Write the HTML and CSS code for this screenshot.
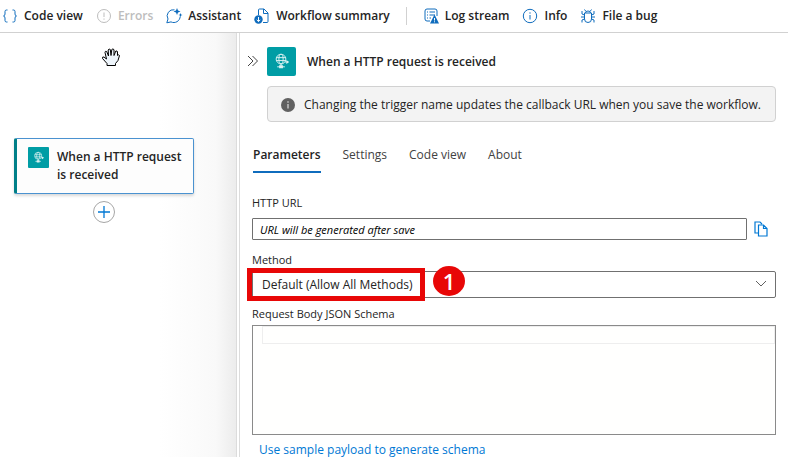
FILE: index.html
```html
<!DOCTYPE html>
<html lang="en">
<head>
<meta charset="utf-8">
<title>Workflow designer</title>
<link rel="stylesheet" href="styles.css">
</head>
<body>
<svg class="sprite" aria-hidden="true">
  <symbol id="globe" viewBox="0 0 30 30">
    <g fill="none" stroke="#d8f1f1" stroke-width="1">
      <circle cx="14.500" cy="12.500" r="5"/>
      <ellipse cx="14.500" cy="12.500" rx="2.200" ry="5"/>
      <path d="M9.500 11h10M9.500 14h10M14.500 17.500v3M10.500 20.500h8M18.500 15.500h3"/>
    </g>
    <path d="M20 13.500l3 2-3 2zM12.500 19h4v3h-4z" fill="#d8f1f1"/>
  </symbol>
</svg>
<header class="toolbar">
  <button class="tool">
    <svg class="icon" viewBox="0 0 16 16"><path d="M5.500 2H4.500Q3 2 3 3.500V6Q3 7.700 1.500 8 3 8.300 3 10v2.500Q3 14 4.500 14h1M10.500 2h1Q13 2 13 3.500V6q0 1.700 1.500 2Q13 8.300 13 10v2.500q0 1.500-1.500 1.500h-1"/></svg>
    Code view
  </button>
  <button class="tool" disabled>
    <svg class="icon" viewBox="0 0 16 16"><circle cx="8" cy="8" r="6.500"/><path d="M8 4.500v4.500M8 10.500v1.200"/></svg>
    Errors
  </button>
  <button class="tool">
    <svg class="icon" viewBox="0 0 16 16"><path d="M8.500 1.800A6.200 6.200 0 0 0 2 11L.8 14.800 5 13.900A6.400 6.400 0 0 0 14.200 8.500"/><path class="solid" d="M11 0l1 2.500L14.500 3.500l-2.500 1-1 2.500-1-2.500L7.500 3.500l2.500-1zM14.500 5l.6 1.400 1.400.6-1.400.6-.6 1.400-.6-1.400-1.400-.6 1.400-.6z"/></svg>
    Assistant
  </button>
  <button class="tool">
    <svg class="icon" viewBox="0 0 16 16"><path d="M4.500 7V2Q4.500 1 5.500 1H10l4 4v8.500q0 1-1 1H9M9.500 1v4.500H14"/><circle class="solid" cx="4.500" cy="11.500" r="4.200"/><path class="cut" d="M4.500 9v4.500M2.700 11.800l1.800 1.800 1.800-1.800"/></svg>
    Workflow summary
  </button>
  <span class="divider"></span>
  <button class="tool">
    <svg class="icon" viewBox="0 0 16 16"><path d="M7 13H4Q2 13 2 11V3q0-2 2-2h8q2 0 2 2v5M4 4h1M6.500 4H12M4 7h1M6.500 7H12M4 10h1M6.500 10H8"/><path class="solid" d="M11.500 6.500l4.500 9H7z"/><path class="cut" d="M11.500 10v2.500M11.500 13.300v1"/></svg>
    Log stream
  </button>
  <button class="tool">
    <svg class="icon" viewBox="0 0 16 16"><circle cx="8" cy="8" r="6.700"/><path d="M8 7v4.500M8 4.300v1.400"/></svg>
    Info
  </button>
  <button class="tool">
    <svg class="icon" viewBox="0 0 16 16"><path d="M4.500 5H11.500V11a3.500 3.500 0 0 1-7 0zM5.500 5Q5.500 3 8 3t2.500 2M6 3.500L4.500 1.500M10 3.500l1.500-2M4.500 7L2 6V3M11.500 7L14 6V3M4.500 9H1M11.500 9H15M4.500 11L2 12v2.500M11.500 11l2.500 1v2.500"/></svg>
    File a bug
  </button>
</header>
<main class="workspace">
  <section class="canvas" aria-label="Designer canvas">
    <svg class="hand" viewBox="0 0 20 20"><path d="M6 18.500V16.500L1.500 11.500Q1 9.500 3 10L5.500 12 4 5.500Q4 3.700 5.700 4.500L7.500 9 7.200 3Q8 1.200 9.300 2.500L10 8.500 10.800 2.500Q12 1.200 13 2.700V8.500L14.800 4Q16.300 3.500 16.500 5V8.500Q18 7 18.500 8.500L17 13.500 14.500 16.500V18.500z" fill="#eef5fb" stroke="#000"/></svg>
    <button class="node">
      <svg class="node-icon"><use href="#globe"/></svg>
      <span>When a HTTP request is received</span>
    </button>
    <button class="add" aria-label="Add an action"><svg viewBox="0 0 20 20"><path d="M10 4v12M4 10h12"/></svg></button>
  </section>
  <section class="panel">
    <div class="panel-head">
      <button class="collapse" aria-label="Collapse panel"><svg viewBox="0 0 12 12"><path d="M1 1l5 5-5 5M5.500 1l5 5-5 5"/></svg></button>
      <svg class="panel-icon"><use href="#globe"/></svg>
      <h1>When a HTTP request is received</h1>
    </div>
    <p class="notice">
      <svg viewBox="0 0 14 14"><circle cx="7" cy="7" r="7" fill="#616161"/><path d="M7 6v4.500M7 3.300v1.400" stroke="#ddd" stroke-width="1.200"/></svg>
      Changing the trigger name updates the callback URL when you save the workflow.
    </p>
    <nav class="tabs" role="tablist">
      <button role="tab" aria-selected="true">Parameters</button>
      <button role="tab">Settings</button>
      <button role="tab">Code view</button>
      <button role="tab">About</button>
    </nav>
    <form class="fields">
      <label for="url">HTTP URL</label>
      <div class="url-row">
        <input id="url" type="text" value="URL will be generated after save" readonly>
        <button type="button" class="copy" aria-label="Copy URL"><svg viewBox="0 0 14 16"><path d="M4 12H1V1h5l2 2M4.500 4h5L13 7.500V15H4.500zM9.500 4v3.500H13"/></svg></button>
      </div>
      <label for="method">Method</label>
      <div class="select-row">
        <select id="method"><option>Default (Allow All Methods)</option></select>
        <svg class="chevron" viewBox="0 0 12 8"><path d="M1 1l5 5 5-5"/></svg>
        <span class="marker"></span>
        <span class="step">1</span>
      </div>
      <label for="schema">Request Body JSON Schema</label>
      <div class="editor"><textarea id="schema" spellcheck="false"></textarea></div>
      <a class="sample" href="#schema">Use sample payload to generate schema</a>
    </form>
  </section>
</main>
</body>
</html>
```
FILE: styles.css
```css
* { box-sizing: border-box; }
body {
  margin: 0;
  height: 100vh;
  display: flex;
  flex-direction: column;
  overflow: hidden;
  background: #fff;
  color: #242424;
  font: 12px/18px "Open Sans", "Noto Sans", sans-serif;
}
button, input, select, textarea { font: inherit; color: inherit; border: 0; margin: 0; padding: 0; background: none; }
svg { display: block; flex: none; }
.sprite { position: absolute; width: 0; height: 0; }

.toolbar {
  display: flex;
  align-items: center;
  gap: 13px;
  height: 33px;
  flex: none;
  padding: 0 2px;
  border-bottom: 1px solid #d1d1d1;
}
.tool { display: flex; align-items: center; gap: 6px; font-weight: 600; white-space: nowrap; }
.tool:disabled { color: #bdbdbd; }
.icon { width: 16px; height: 16px; overflow: visible; fill: none; stroke: #0f6cbd; stroke-width: 1; }
.tool:disabled .icon { stroke: #bdbdbd; }
.icon .solid { fill: #0f6cbd; stroke: none; }
.icon .cut { stroke: #fff; }
.divider { width: 1px; height: 18px; margin: 0 3px; background: #d1d1d1; }

.workspace { flex: 1; display: flex; min-height: 0; }
.canvas {
  flex: 1;
  min-width: 0;
  padding: 14px 14px 0;
  background: linear-gradient(to right, #fff calc(100% - 76px), #f9f9f9 calc(100% - 20px), #ececec);
}
.hand { width: 20px; height: 20px; margin-left: 87px; }
.node {
  display: flex;
  align-items: flex-start;
  gap: 8px;
  width: 180px;
  height: 56px;
  margin-top: 71px;
  padding: 8px 11px 0 11px;
  border: 1px solid #4a92d0;
  border-left: 3px solid #007f88;
  border-radius: 2px;
  background: #fdfdfd;
  box-shadow: 0 2px 3px #00000026;
  font-weight: 600;
  text-align: left;
}
.node span { padding-top: 1px; }
.node-icon { width: 21px; height: 21px; border-radius: 1px; background: #009da5; }
.add { display: block; width: 22px; height: 22px; margin: 7px 0 0 79px; border: 1px solid #a6a6a6; border-radius: 50%; background: #fff; }
.add svg { width: 20px; height: 20px; fill: none; stroke: #0078d4; stroke-width: 1.3; }

.panel {
  flex: none;
  width: 552px;
  padding: 13px 12px 0 7px;
  border-left: 4px double #dcdcdc;
}
.panel-head { display: flex; align-items: center; height: 30px; }
.collapse { width: 20px; }
.collapse svg { width: 12px; height: 12px; fill: none; stroke: #424242; }
.panel-icon { width: 29px; height: 29px; border-radius: 2px; background: #009da5; }
h1 { margin: 0 0 0 11px; padding-top: 1px; font-size: 12px; font-weight: 600; }
.notice {
  display: flex;
  align-items: center;
  gap: 9px;
  height: 36px;
  margin: 10px 0 0 20px;
  padding: 2px 13px 0;
  border: 1px solid #d1d1d1;
  border-radius: 4px;
  background: #f3f3f3;
  white-space: nowrap;
}
.notice svg { width: 14px; height: 14px; }

.tabs { display: flex; gap: 22px; margin: 16px 0 0 6px; }
.tabs button { height: 35px; color: #424242; border-bottom: 2px solid transparent; }
.tabs [aria-selected] { font-weight: 600; color: #242424; border-bottom-color: #0f6cbd; }

.fields { display: flex; flex-direction: column; margin-top: 22px; padding-left: 5px; }
.fields label { height: 23px; font-size: 11px; line-height: 16px; }
.url-row { display: flex; align-items: center; margin-bottom: 12px; }
.url-row input { flex: 1; min-width: 0; height: 22px; padding: 0 7px; border: 1px solid #707070; border-radius: 1px; font-size: 11px; font-style: italic; color: #000; }
.copy { margin: 0 8px 0 7px; }
.copy svg { width: 14px; height: 16px; fill: none; stroke: #0078d4; stroke-width: 1.2; }
.fields label[for="method"], .fields label[for="schema"] { height: 19px; }
.select-row { position: relative; margin-bottom: 8px; }
select { appearance: none; display: block; width: 100%; height: 27px; padding: 1px 9px 0; border: 1px solid #707070; border-radius: 2px; }
.chevron { position: absolute; right: 9px; top: 9px; width: 12px; height: 8px; fill: none; stroke: #616161; }
.marker { position: absolute; left: -5px; top: -3px; width: 178px; height: 33px; border: 5px solid #e80707; pointer-events: none; }
.step {
  position: absolute;
  left: 181px;
  top: -5px;
  width: 32px;
  height: 30px;
  border-radius: 50%;
  background: #e80707;
  color: #fff;
  font-size: 22px;
  font-weight: 600;
  line-height: 30px;
  text-align: center;
}
.editor { position: relative; height: 110px; border: 1px solid #8a8a8a; background: #fffffe; }
.editor::before { content: ""; position: absolute; inset: 0 0 auto 9px; height: 16px; border: 1px solid #eee; }
textarea { position: relative; display: block; width: 100%; height: 100%; padding-left: 10px; resize: none; }
.sample { align-self: flex-start; margin: 6px 0 0 7px; color: #0078d4; text-decoration: none; white-space: nowrap; }
```
